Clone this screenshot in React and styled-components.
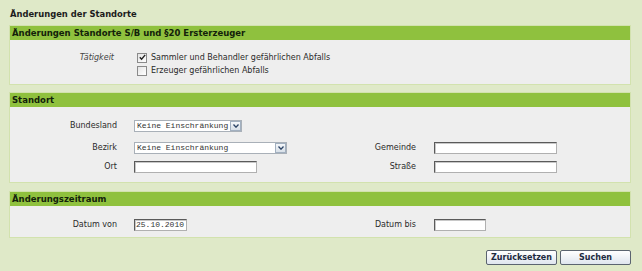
import React from 'react';
import styled, { createGlobalStyle } from 'styled-components';

const GlobalStyle = createGlobalStyle`
  html, body {
    margin: 0;
    padding: 0;
    background: #dfe9c8;
  }
  body {
    font-family: "DejaVu Sans", Verdana, sans-serif;
    font-size: 8px;
    color: #222;
  }
`;

const Page = styled.div`
  width: 642px;
  height: 271px;
  box-sizing: border-box;
  padding: 6px 8px 0 9px;
  border-left: 3px solid #d7e3be;
  margin-left: -3px;
`;

const Title = styled.h1`
  margin: 0 0 3px 1px;
  font-size: 8.4px;
  line-height: 16px;
  font-weight: bold;
  color: #1c1c1c;
`;

const Section = styled.section`
  border: 1px solid #d2e2ae;
  margin-bottom: ${p => p.$gap || 0}px;
`;

const SectionHead = styled.div`
  height: 14px;
  line-height: 14px;
  background: #8fc13e;
  padding-left: 2px;
  font-weight: bold;
  font-size: 8.5px;
  color: #13210a;
`;

const Body = styled.div`
  background: #eeeeee;
  padding: ${p => p.$pad};
  display: grid;
  grid-template-columns: 124px 165px 135px 1fr;
  row-gap: ${p => p.$rowGap || 0}px;
  align-items: center;
`;

const Label = styled.div`
  text-align: right;
  padding-right: ${p => p.$right || 17}px;
  font-style: ${p => (p.$italic ? 'italic' : 'normal')};
  color: ${p => (p.$italic ? '#444' : '#2a2a2a')};
  white-space: nowrap;
  height: 13px;
  line-height: 13px;
  margin-top: ${p => p.$shift || 0}px;
`;

const Cell = styled.div`
  display: flex;
  flex-direction: column;
  align-items: flex-start;
  grid-column: ${p => p.$span || 'auto'};
  margin-top: ${p => p.$shift || 0}px;
`;

const CheckRow = styled.label`
  display: flex;
  align-items: center;
  gap: 4px;
  height: 13px;
  margin-left: 3px;
  white-space: nowrap;
  color: #2a2a2a;
`;

const Box = styled.span`
  width: 8px;
  height: 8px;
  border: 1px solid #8a8a8a;
  background: linear-gradient(135deg, #e4e4e4, #ffffff);
  display: flex;
  align-items: center;
  justify-content: center;
`;

const Select = styled.div`
  display: flex;
  width: ${p => p.$w}px;
  height: 10px;
  border: 1px solid #a9b0b8;
  background: #fff;
`;

const SelectText = styled.span`
  flex: 1;
  font-family: "Liberation Mono", "DejaVu Sans Mono", monospace;
  font-size: 8px;
  line-height: 10px;
  padding-left: 2px;
  color: #333;
  white-space: nowrap;
  overflow: hidden;
`;

const Arrow = styled.span`
  width: 9px;
  height: 8px;
  margin-left: 1px;
  align-self: center;
  border: 1px solid #a2b0c0;
  background: linear-gradient(#f4f7fa, #d8e0e8);
  display: flex;
  align-items: center;
  justify-content: center;
`;

const Input = styled.div`
  width: ${p => p.$w}px;
  height: 10px;
  border: 1px solid #5a5a5a;
  border-right-color: #b0b0b0;
  border-bottom-color: #b0b0b0;
  box-shadow: inset 1px 1px 0 #c8c8c8;
  background: #fff;
  font-family: "Liberation Mono", "DejaVu Sans Mono", monospace;
  font-size: 8px;
  line-height: 10px;
  padding-left: 1px;
  color: #333;
`;

const Actions = styled.div`
  display: flex;
  justify-content: flex-end;
  gap: 3px;
  margin-top: 12px;
`;

const Button = styled.button`
  width: ${p => p.$w}px;
  height: 15px;
  padding: 0;
  border: 1px solid #5b6470;
  border-radius: 2px;
  background: linear-gradient(#ffffff, #dfe5ee);
  font-family: "DejaVu Sans", Verdana, sans-serif;
  font-size: 8px;
  font-weight: bold;
  color: #1d2a40;
  line-height: 13px;
`;

const Check = () => (
  <svg width="7" height="7" viewBox="0 0 7 7">
    <path d="M0.8 3.2 L2.6 5.2 L6.2 0.9" fill="none" stroke="#222" strokeWidth="1.4" />
  </svg>
);

const Chevron = () => (
  <svg width="6" height="4" viewBox="0 0 6 4">
    <path d="M0.5 0.5 L3 3.2 L5.5 0.5" fill="none" stroke="#2c4466" strokeWidth="1.3" />
  </svg>
);

const Dropdown = ({ w, value }) => (
  <Select $w={w}>
    <SelectText>{value}</SelectText>
    <Arrow><Chevron /></Arrow>
  </Select>
);

const Empty = () => <div />;

export default function App() {
  return (
    <>
      <GlobalStyle />
      <Page>
        <Title>Änderungen der Standorte</Title>

        <Section $gap={7}>
          <SectionHead>Änderungen Standorte S/B und §20 Ersterzeuger</SectionHead>
          <Body $pad="11px 0 7px">
            <Label $italic $right={20} style={{ alignSelf: 'start' }}>Tätigkeit</Label>
            <Cell $span="2 / 5">
              <CheckRow><Box><Check /></Box>Sammler und Behandler gefährlichen Abfalls</CheckRow>
              <CheckRow><Box />Erzeuger gefährlichen Abfalls</CheckRow>
            </Cell>
          </Body>
        </Section>

        <Section $gap={8}>
          <SectionHead>Standort</SectionHead>
          <Body $pad="12px 0 9px" $rowGap={9}>
            <Label>Bundesland</Label>
            <Cell><Dropdown w={106} value="Keine Einschränkung" /></Cell>
            <Empty />
            <Empty />

            <Label>Bezirk</Label>
            <Cell><Dropdown w={151} value="Keine Einschränkung" /></Cell>
            <Label $right={18}>Gemeinde</Label>
            <Cell><Input $w={120} /></Cell>

            <Label $shift={-3}>Ort</Label>
            <Cell $shift={-3}><Input $w={120} /></Cell>
            <Label $right={18} $shift={-3}>Straße</Label>
            <Cell $shift={-3}><Input $w={120} /></Cell>
          </Body>
        </Section>

        <Section>
          <SectionHead>Änderungszeitraum</SectionHead>
          <Body $pad="12px 0 6px">
            <Label>Datum von</Label>
            <Cell><Input $w={50}>25.10.2010</Input></Cell>
            <Label $right={18}>Datum bis</Label>
            <Cell><Input $w={49} /></Cell>
          </Body>
        </Section>

        <Actions>
          <Button $w={71}>Zurücksetzen</Button>
          <Button $w={71}>Suchen</Button>
        </Actions>
      </Page>
    </>
  );
}
